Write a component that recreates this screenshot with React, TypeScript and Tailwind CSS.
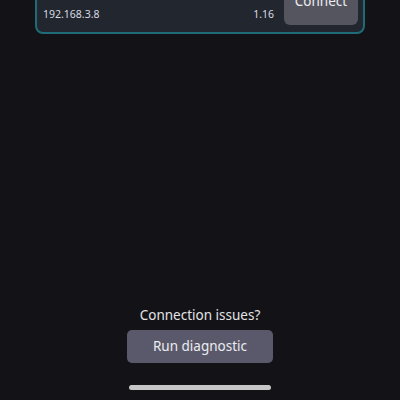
export default function App() {
  return (
    <div
      className="w-[400px] h-[400px] overflow-hidden bg-[#131317] flex flex-col"
      style={{ fontFamily: '"Noto Sans", "Open Sans", sans-serif' }}
    >
      <div className="mx-[35px] mt-[-30px] rounded-lg border-2 border-[#1f6b77] bg-[#22262f] pl-[6px] pr-[5px] pt-[8px] pb-[7px] flex items-end">
        <div className="flex-1 flex justify-between items-center mb-[3px] pr-[10px]">
          <span className="text-[10.5px] leading-[15px] text-[#d8dbe0]">192.168.3.8</span>
          <span className="text-[10.5px] leading-[15px] text-[#d8dbe0]">1.16</span>
        </div>
        <button className="w-[74px] h-[45px] rounded-md bg-[#55555f] text-[13.5px] leading-[20px] text-[#ececf0] flex justify-center pt-[11px]">
          Connect
        </button>
      </div>
      <div className="flex-1" />
      <div className="flex flex-col items-center pb-[10px]">
        <div className="text-[13.5px] leading-[20px] text-[#e4e4e6]">Connection issues?</div>
        <button className="mt-[5px] w-[146px] h-[33px] rounded-[5px] bg-[#5a596b] text-[13.5px] text-[#ececf0] flex items-center justify-center">
          Run diagnostic
        </button>
        <div className="mt-[22px] w-[142px] h-[5px] rounded-full bg-[#c6c6c8]" />
      </div>
    </div>
  );
}
